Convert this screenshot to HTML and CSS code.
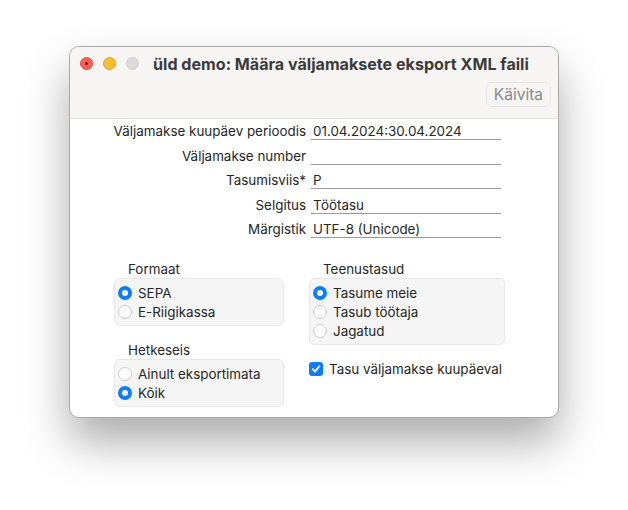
FILE: index.html
```html
<!DOCTYPE html>
<html lang="et">
<head>
    <meta charset="UTF-8">
    <title>Määra väljamaksete eksport XML faili</title>
    <link rel="stylesheet" href="styles.css">
</head>
<body>
    <div class="window">
        <!-- title bar + toolbar -->
        <div class="titlebar">
            <div class="title-row">
                <span class="light red"></span>
                <span class="light yellow"></span>
                <span class="light gray"></span>
                <span class="title">üld demo: Määra väljamaksete eksport XML faili</span>
            </div>
            <div class="toolbar">
                <button class="run">Käivita</button>
            </div>
        </div>

        <div class="content">
            <!-- text fields -->
            <div class="fields">
                <label>Väljamakse kuupäev perioodis</label>
                <div class="field">01.04.2024:30.04.2024</div>
                <label>Väljamakse number</label>
                <div class="field"></div>
                <label>Tasumisviis*</label>
                <div class="field">P</div>
                <label>Selgitus</label>
                <div class="field">Töötasu</div>
                <label>Märgistik</label>
                <div class="field">UTF-8 (Unicode)</div>
            </div>

            <!-- option groups -->
            <div class="groups">
                <div class="col left">
                    <div class="group">
                        <div class="group-title">Formaat</div>
                        <div class="box">
                            <div class="option"><span class="radio on"></span>SEPA</div>
                            <div class="option"><span class="radio"></span>E-Riigikassa</div>
                        </div>
                    </div>
                    <div class="group">
                        <div class="group-title">Hetkeseis</div>
                        <div class="box">
                            <div class="option"><span class="radio"></span>Ainult eksportimata</div>
                            <div class="option"><span class="radio on"></span>Kõik</div>
                        </div>
                    </div>
                </div>
                <div class="col right">
                    <div class="group">
                        <div class="group-title">Teenustasud</div>
                        <div class="box">
                            <div class="option"><span class="radio on"></span>Tasume meie</div>
                            <div class="option"><span class="radio"></span>Tasub töötaja</div>
                            <div class="option"><span class="radio"></span>Jagatud</div>
                        </div>
                    </div>
                    <div class="check">
                        <span class="checkbox">
                            <svg width="10" height="10" viewBox="0 0 10 10"><path d="M1.8 5.2 L4 7.6 L8.4 2.2" fill="none" stroke="#fff" stroke-width="1.8" stroke-linecap="round" stroke-linejoin="round"/></svg>
                        </span>
                        Tasu väljamakse kuupäeval
                    </div>
                </div>
            </div>
        </div>
    </div>
</body>
</html>
```

FILE: styles.css
```css
html, body {
    margin: 0;
    background: #fff;
}
body {
    height: 510px;
    box-sizing: border-box;
    padding: 46px 0 0 69px;
    font-family: Inter, "Noto Sans", sans-serif;
    font-size: 13.4px;
    color: #262626;
}
.window {
    width: 490px;
    height: 372px;
    box-sizing: border-box;
    border-radius: 10px;
    background: #fff;
    overflow: hidden;
    border: 1px solid #a9a9a9;
    box-shadow: 0 24px 45px rgba(0, 0, 0, 0.33);
}
.titlebar {
    background: #f6f5f3;
    height: 71px;
    border-bottom: 1px solid #e2e1df;
}
.title-row {
    display: flex;
    align-items: center;
    height: 33px;
    padding-left: 10px;
}
.light {
    width: 13px;
    height: 13px;
    border-radius: 50%;
    margin-right: 10px;
    box-sizing: border-box;
}
.light.red {
    background: #fe5f57;
    border: 1px solid #e14942;
    position: relative;
}
.light.red::after {
    content: "";
    position: absolute;
    left: 4px;
    top: 4px;
    width: 3px;
    height: 3px;
    border-radius: 50%;
    background: #7d0f0b;
}
.light.yellow {
    background: #febc2e;
    border: 1px solid #e0a126;
}
.light.gray {
    background: #dcdbd9;
    border: 1px solid #cfcecc;
}
.title {
    margin-left: 4px;
    font-weight: 700;
    font-size: 16.1px;
    color: #3b3b3b;
}
.toolbar {
    display: flex;
    justify-content: flex-end;
    padding: 2px 7px 0 0;
}
.run {
    font-family: inherit;
    font-size: 15.5px;
    color: #8a8a8a;
    background: #f6f5f3;
    border: 1px solid #e6e5e3;
    border-radius: 6px;
    height: 25px;
    padding: 0 7px;
}
.content {
    padding-top: 1px;
}
.fields {
    display: grid;
    grid-template-columns: 236px 190px;
    column-gap: 5px;
    row-gap: 4.5px;
    align-items: end;
}
.fields label {
    text-align: right;
    height: 19px;
    line-height: 22px;
    padding-bottom: 1px;
}
.field {
    height: 19px;
    line-height: 22px;
    border-bottom: 1px solid #9b9b9b;
    padding-left: 2px;
}
.groups {
    display: flex;
    margin-top: 23px;
    padding-left: 44px;
}
.col.left {
    width: 170px;
}
.col.right {
    margin-left: 25px;
    width: 196px;
}
.group {
    margin-bottom: 16px;
}
.group-title {
    padding-left: 14px;
    line-height: 16px;
    margin-bottom: 1px;
}
.box {
    background: #f5f5f5;
    border: 1px solid #e8e8e8;
    border-radius: 6px;
    padding: 4px 3px;
}
.option {
    display: flex;
    align-items: center;
    height: 19px;
}
.radio {
    width: 14px;
    height: 14px;
    border-radius: 50%;
    box-sizing: border-box;
    background: #fff;
    border: 1px solid #cacaca;
    margin-right: 6px;
    flex-shrink: 0;
}
.radio.on {
    border: 4.5px solid #0b7dff;
}
.check {
    display: flex;
    align-items: center;
    height: 19px;
    margin-top: -1.5px;
}
.checkbox {
    width: 14px;
    height: 14px;
    border-radius: 3px;
    background: #0b7dff;
    display: flex;
    align-items: center;
    justify-content: center;
    margin-right: 6px;
}
```
